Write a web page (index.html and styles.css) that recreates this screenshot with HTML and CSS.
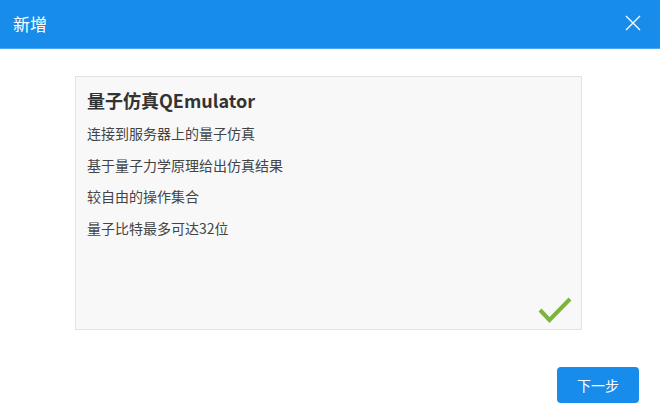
FILE: index.html
```html
<!DOCTYPE html>
<html lang="zh">
<head>
<meta charset="utf-8">
<link rel="stylesheet" href="styles.css">
</head>
<body>
<div class="dialog">
  <header class="dialog-header">
    <span class="dialog-title">新增</span>
    <svg class="close" width="16" height="16" viewBox="0 0 16 16"><path d="M1 1L15 15M15 1L1 15" stroke="#fff" stroke-width="1.4" fill="none"/></svg>
  </header>
  <main class="dialog-body">
    <div class="card">
      <h2 class="card-title">量子仿真QEmulator</h2>
      <p class="card-line">连接到服务器上的量子仿真</p>
      <p class="card-line">基于量子力学原理给出仿真结果</p>
      <p class="card-line">较自由的操作集合</p>
      <p class="card-line">量子比特最多可达32位</p>
      <svg class="check" width="34" height="28" viewBox="0 0 34 28"><path d="M2 13L11.5 23L32 2" stroke="#7cb53b" stroke-width="4" fill="none" stroke-linejoin="miter"/></svg>
    </div>
  </main>
  <footer class="dialog-footer">
    <button class="btn-next">下一步</button>
  </footer>
</div>
</body>
</html>
```

FILE: styles.css
```css
html, body {
  margin: 0;
  padding: 0;
  background: #fff;
  font-family: "Noto Sans CJK SC", "Noto Sans", sans-serif;
}
.dialog {
  width: 660px;
  height: 409px;
  display: flex;
  flex-direction: column;
}
.dialog-header {
  height: 49px;
  background: #188cea;
  border-bottom: 1px solid #4aa6f0;
  display: flex;
  align-items: center;
  justify-content: space-between;
  padding: 0 19px 0 13px;
  box-sizing: border-box;
  flex-shrink: 0;
}
.dialog-title {
  color: #fff;
  font-size: 17px;
  line-height: 1;
  margin-top: -1px;
}
.close {
  display: block;
  margin-top: -3px;
}
.dialog-body {
  padding: 27px 0 0 75px;
}
.card {
  position: relative;
  width: 507px;
  height: 254px;
  box-sizing: border-box;
  background: #f8f8f8;
  border: 1px solid #e3e3e3;
  padding: 11px 11px 0;
}
.card-title {
  margin: 0 0 5px;
  font-size: 18px;
  font-weight: bold;
  color: #333;
  line-height: 25px;
}
.card-line {
  margin: 0;
  font-size: 14px;
  color: #444;
  line-height: 31.7px;
}
.check {
  position: absolute;
  right: 9px;
  bottom: 4px;
}
.dialog-footer {
  display: flex;
  justify-content: flex-end;
  padding: 37px 21px 0 0;
}
.btn-next {
  width: 82px;
  height: 36px;
  background: #188cea;
  border: none;
  border-radius: 4px;
  color: #fff;
  font-family: "Noto Sans CJK SC", sans-serif;
  font-size: 14px;
  padding: 0;
}
```
